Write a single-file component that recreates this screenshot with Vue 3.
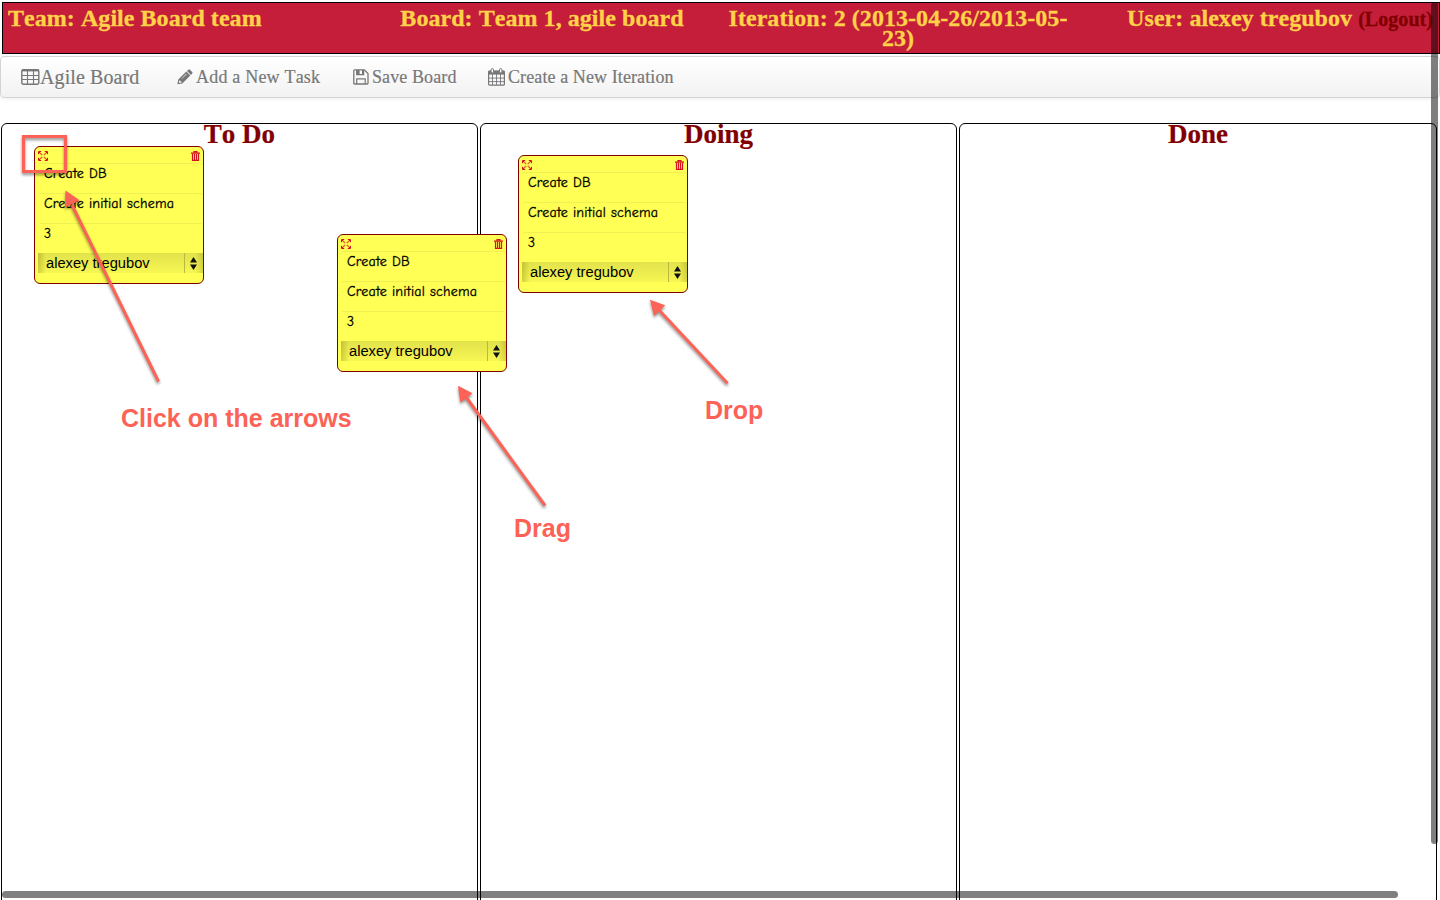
<script setup>
const lanes = ['To Do', 'Doing', 'Done']

const cards = [
  { id: 1, x: 34, y: 146 },
  { id: 2, x: 337, y: 234 },
  { id: 3, x: 518, y: 155 },
].map((c) => ({
  ...c,
  title: 'Create DB',
  description: 'Create initial schema',
  points: '3',
  owner: 'alexey tregubov',
}))

const notes = [
  { text: 'Click on the arrows', x: 121, y: 427 },
  { text: 'Drag', x: 514, y: 537 },
  { text: 'Drop', x: 705, y: 419 },
]
</script>

<template>
  <div class="page">
    <header class="banner">
      <div class="cell left">Team: Agile Board team</div>
      <div class="cell">Board: Team 1, agile board</div>
      <div class="cell">Iteration: 2 (2013-04-26/2013-05-<br />23)</div>
      <div class="cell right">User: alexey tregubov <a class="logout">(Logout)</a></div>
    </header>

    <nav class="navbar">
      <a class="brand">
        <svg width="19" height="16" viewBox="0 0 19 16">
          <rect x="0.8" y="0.8" width="17" height="14.4" rx="1.4" fill="none" stroke="#777" stroke-width="1.4" />
          <path d="M0.8 1.4H17.8" stroke="#777" stroke-width="2" />
          <path d="M1 6.5H18M1 10.5H18M6.5 2V15M12.5 2V15" stroke="#777" stroke-width="1.1" />
        </svg><span>Agile Board</span>
      </a>
      <a class="item add">
        <svg width="16" height="16" viewBox="0 0 16 16">
          <path fill="#777" fill-rule="evenodd" d="M0.3 15.2L1.3 10.6L9.3 2.6L13.3 6.6L5.3 14.6ZM2.3 11.4L1.8 13.3L2.7 14.1L4.5 13.6V12.4H3.3V11.4ZM4.6 9.4L5 9.8L9.6 5.2L9.2 4.8Z" />
          <path fill="#777" d="M10 1.9L11.3 0.7Q12.1 0 12.9 0.7L15.2 3Q16 3.8 15.2 4.6L14 5.9Z" />
        </svg><span>Add a New Task</span>
      </a>
      <a class="item save">
        <svg width="16" height="16" viewBox="0 0 16 16">
          <path fill="none" stroke="#777" stroke-width="1.3" d="M1.6 0.9H11.3L15 4.6V14.2Q15 15 14.2 15H1.6Q0.8 15 0.8 14.2V1.7Q0.8 0.9 1.6 0.9Z" />
          <path fill="none" stroke="#777" stroke-width="1.2" d="M3.7 15V9.8H12.2V15M3.7 1V5.7H10.6V1" />
          <path fill="#777" d="M3.7 1H6.6V5.5H3.7ZM9 1H10.8V5.5H9Z" />
        </svg><span>Save Board</span>
      </a>
      <a class="item create">
        <svg width="17" height="18" viewBox="0 0 17 18">
          <rect x="0.6" y="3.2" width="15.8" height="14" rx="1" fill="none" stroke="#777" stroke-width="1.2" />
          <path fill="#777" d="M0.4 2.8H16.6V6.6H0.4Z" />
          <path fill="none" stroke="#777" stroke-width="0.9" d="M1 10.1H16M1 13.6H16M4.5 6V17M8.5 6V17M12.5 6V17" />
          <rect x="3.1" y="0.6" width="2.4" height="4.4" rx="1.2" fill="#fff" stroke="#777" />
          <rect x="11.5" y="0.6" width="2.4" height="4.4" rx="1.2" fill="#fff" stroke="#777" />
        </svg><span>Create a New Iteration</span>
      </a>
    </nav>

    <main class="board">
      <section v-for="lane in lanes" :key="lane" class="lane">
        <h2>{{ lane }}</h2>
      </section>
    </main>

    <article v-for="c in cards" :key="c.id" class="card" :style="{ left: c.x + 'px', top: c.y + 'px' }">
      <div class="tools">
        <svg width="10" height="10" viewBox="0 0 10 10">
          <path fill="none" stroke="#d3141c" stroke-width="1" d="M0.5 3.2V0.5H3.2M6.8 0.5H9.5V3.2M9.5 6.8V9.5H6.8M3.2 9.5H0.5V6.8" />
          <path fill="none" stroke="#d3141c" stroke-width="1.1" stroke-dasharray="1.6 .3" d="M1 1L4.2 4.2M9 1L5.8 4.2M9 9L5.8 5.8M1 9L4.2 5.8" />
        </svg>
        <svg width="9" height="10" viewBox="0 0 9 10">
          <path fill="none" stroke="#d3141c" stroke-width="1.2" d="M0 2.2H9M3 1.8V0.6H6V1.8" />
          <path fill="none" stroke="#d3141c" stroke-width="1.2" d="M1.5 2.5V9.3H7.5V2.5M3.5 3V9M5.5 3V9" />
        </svg>
      </div>
      <div class="field">{{ c.title }}</div>
      <div class="field">{{ c.description }}</div>
      <div class="field">{{ c.points }}</div>
      <div class="select">
        <span>{{ c.owner }}</span>
        <i class="stepper">
          <svg width="7" height="13" viewBox="0 0 7 13">
            <path d="M3.5 0L7 5.4H0ZM3.5 13L7 7.6H0Z" fill="#111" />
          </svg>
        </i>
      </div>
    </article>

    <svg class="overlay" width="1440" height="900" viewBox="0 0 1440 900">
      <g class="marks">
        <rect x="23.5" y="136.5" width="42" height="35" fill="none" stroke="#fc6255" stroke-width="3" />
        <path d="M72 205L158.5 381.5M466 397L545 505.5M659 310L727.5 383.3" stroke="#fc6255" stroke-width="3" />
        <path d="M65.5 190.5L79.6 200.3L65 207.8ZM458 385.7L472.5 393.3L460.3 402.6ZM650 299.7L665.2 305.2L654 316Z" fill="#fc6255" />
      </g>
      <text v-for="n in notes" :key="n.text" :x="n.x" :y="n.y">{{ n.text }}</text>
    </svg>

    <div class="thumb vertical"></div>
    <div class="thumb horizontal"></div>
  </div>
</template>

<style>
body {
  margin: 0;
  background: #fff;
  overflow: hidden;
}
</style>

<style scoped>
.page {
  position: relative;
  width: 1440px;
  height: 900px;
  box-sizing: border-box;
  padding-top: 2px;
  overflow: hidden;
  background: #fff;
  font-family: "Times New Roman", "Liberation Serif", serif;
  font-kerning: none;
}
.banner {
  display: grid;
  grid-template-columns: 356px 356px 356px 1fr;
  box-sizing: border-box;
  height: 52px;
  margin: 0 0 0 2px;
  padding: 5px 6px 0 5px;
  border: 1px solid #000;
  background: #c41e3a;
  color: #ffd248;
  font-size: 24px;
  font-weight: bold;
  line-height: 20px;
  letter-spacing: 0.05px;
  -webkit-text-stroke: 0.3px;
  text-align: center;
  white-space: nowrap;
}
.left {
  text-align: left;
}
.right {
  text-align: right;
}
.logout {
  font-size: 20px;
  color: #800000;
}
.navbar {
  display: flex;
  box-sizing: border-box;
  height: 42px;
  margin-top: 2px;
  padding-left: 20px;
  border: 1px solid #d4d4d4;
  border-radius: 4px;
  background: linear-gradient(#fff, #f2f2f2);
  box-shadow: 0 1px 4px rgba(0, 0, 0, 0.067);
  color: #777;
  text-shadow: 0 1px 0 #fff;
  -webkit-text-stroke: 0.2px;
  white-space: nowrap;
  line-height: 40px;
}
.brand,
.item {
  display: flex;
}
.navbar svg {
  flex: none;
  margin-top: 12px;
}
.navbar .create svg {
  margin-top: 11px;
}
.brand {
  width: 156px;
  font-size: 20px;
  letter-spacing: 0.1px;
}
.item {
  font-size: 18px;
  letter-spacing: 0.1px;
}
.add {
  width: 176px;
}
.add span {
  margin-left: 3px;
  letter-spacing: 0.2px;
}
.save {
  width: 135px;
}
.save span {
  margin-left: 3px;
}
.create span {
  margin-left: 3px;
}
.board {
  display: flex;
  gap: 2px;
  margin: 25px 0 0 1px;
}
.lane {
  box-sizing: border-box;
  width: 477px;
  height: 800px;
  border: 1px solid #000;
  border-radius: 6px;
}
.lane:last-child {
  width: 478px;
}
.lane h2 {
  margin: 0;
  font-size: 27px;
  line-height: 20px;
  text-align: center;
  color: #800000;
  -webkit-text-stroke: 0.2px;
}
.card {
  position: absolute;
  box-sizing: border-box;
  width: 170px;
  height: 138px;
  padding-left: 3px;
  border: 1px solid #800000;
  border-radius: 6px;
  background: #ffff55;
  color: #000;
}
.tools {
  display: flex;
  justify-content: space-between;
  height: 12px;
  padding: 4px 3px 0 0;
}
.field {
  box-sizing: border-box;
  height: 30px;
  padding-left: 6px;
  border-top: 1px solid #f0f050;
  border-radius: 3px;
  font: 14px/20px "Comic Sans MS", "Comic Neue", Lato, sans-serif;
  letter-spacing: 0.22px;
  -webkit-text-stroke: 0.3px;
}
.select {
  display: flex;
  justify-content: space-between;
  height: 20px;
  background: linear-gradient(90deg, rgba(120, 120, 0, 0.3), transparent 8px, transparent calc(100% - 8px), rgba(120, 120, 0, 0.25)),
    linear-gradient(#e2e24c, #f6f653);
  font: 14.7px/20px Helvetica, "Liberation Sans", sans-serif;
}
.select span {
  padding-left: 8px;
}
.stepper {
  display: flex;
  justify-content: center;
  align-items: center;
  box-sizing: border-box;
  width: 19px;
  padding-right: 2px;
  border-left: 1px solid #b9b93e;
}
.overlay {
  position: absolute;
  left: 0;
  top: 0;
}
.marks {
  filter: drop-shadow(0 2px 1.5px rgba(0, 0, 0, 0.45));
}
.overlay text {
  font: bold 25px Helvetica, "Liberation Sans", sans-serif;
  fill: #fc6255;
}
.thumb {
  position: absolute;
  background: rgba(0, 0, 0, 0.5);
  border-radius: 4px;
}
.vertical {
  left: 1431px;
  top: 2px;
  width: 7px;
  height: 842px;
}
.horizontal {
  left: 2px;
  top: 891px;
  width: 1396px;
  height: 7px;
}
</style>
